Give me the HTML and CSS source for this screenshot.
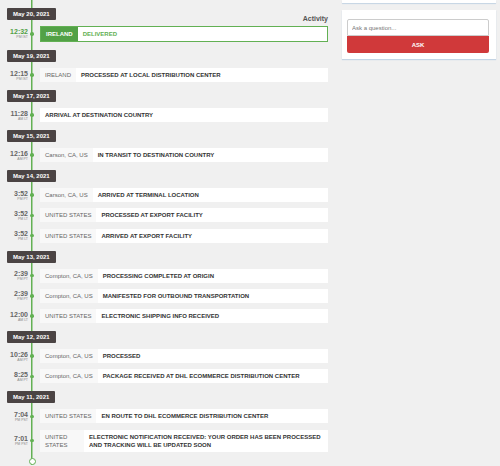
FILE: index.html
```html
<!DOCTYPE html>
<html lang="en">
<head>
    <meta charset="UTF-8">
    <meta name="viewport" content="width=device-width, initial-scale=1.0">
    <title>Shipment Activity</title>
    <link rel="stylesheet" href="styles.css">
</head>
<body>
    <div class="page">
        <div class="main">
            <div class="timeline">
                <h3 class="title">Activity</h3>

                <div class="day">
                    <div class="date">May 20, 2021</div>
                    <div class="event delivered">
                        <div class="time">12:32<small>PM IST</small></div>
                        <div class="dot"></div>
                        <div class="info"><span class="loc">IRELAND</span><span class="desc">DELIVERED</span></div>
                    </div>
                </div>

                <div class="day">
                    <div class="date">May 19, 2021</div>
                    <div class="event">
                        <div class="time">12:15<small>PM IST</small></div>
                        <div class="dot"></div>
                        <div class="info"><span class="loc">IRELAND</span><span class="desc">PROCESSED AT LOCAL DISTRIBUTION CENTER</span></div>
                    </div>
                </div>

                <div class="day">
                    <div class="date">May 17, 2021</div>
                    <div class="event">
                        <div class="time">11:28<small>AM LT</small></div>
                        <div class="dot"></div>
                        <div class="info"><span class="desc">ARRIVAL AT DESTINATION COUNTRY</span></div>
                    </div>
                </div>

                <div class="day">
                    <div class="date">May 15, 2021</div>
                    <div class="event">
                        <div class="time">12:16<small>AM PT</small></div>
                        <div class="dot"></div>
                        <div class="info"><span class="loc">Carson, CA, US</span><span class="desc">IN TRANSIT TO DESTINATION COUNTRY</span></div>
                    </div>
                </div>

                <div class="day">
                    <div class="date">May 14, 2021</div>
                    <div class="event">
                        <div class="time">3:52<small>PM PT</small></div>
                        <div class="dot"></div>
                        <div class="info"><span class="loc">Carson, CA, US</span><span class="desc">ARRIVED AT TERMINAL LOCATION</span></div>
                    </div>
                    <div class="event">
                        <div class="time">3:52<small>PM LT</small></div>
                        <div class="dot"></div>
                        <div class="info"><span class="loc">UNITED STATES</span><span class="desc">PROCESSED AT EXPORT FACILITY</span></div>
                    </div>
                    <div class="event">
                        <div class="time">3:52<small>PM LT</small></div>
                        <div class="dot"></div>
                        <div class="info"><span class="loc">UNITED STATES</span><span class="desc">ARRIVED AT EXPORT FACILITY</span></div>
                    </div>
                </div>

                <div class="day">
                    <div class="date">May 13, 2021</div>
                    <div class="event">
                        <div class="time">2:39<small>PM PT</small></div>
                        <div class="dot"></div>
                        <div class="info"><span class="loc">Compton, CA, US</span><span class="desc">PROCESSING COMPLETED AT ORIGIN</span></div>
                    </div>
                    <div class="event">
                        <div class="time">2:39<small>PM PT</small></div>
                        <div class="dot"></div>
                        <div class="info"><span class="loc">Compton, CA, US</span><span class="desc">MANIFESTED FOR OUTBOUND TRANSPORTATION</span></div>
                    </div>
                    <div class="event">
                        <div class="time">12:00<small>AM LT</small></div>
                        <div class="dot"></div>
                        <div class="info"><span class="loc">UNITED STATES</span><span class="desc">ELECTRONIC SHIPPING INFO RECEIVED</span></div>
                    </div>
                </div>

                <div class="day">
                    <div class="date">May 12, 2021</div>
                    <div class="event">
                        <div class="time">10:26<small>AM PT</small></div>
                        <div class="dot"></div>
                        <div class="info"><span class="loc">Compton, CA, US</span><span class="desc">PROCESSED</span></div>
                    </div>
                    <div class="event">
                        <div class="time">8:25<small>AM PT</small></div>
                        <div class="dot"></div>
                        <div class="info"><span class="loc">Compton, CA, US</span><span class="desc">PACKAGE RECEIVED AT DHL ECOMMERCE DISTRIBUTION CENTER</span></div>
                    </div>
                </div>

                <div class="day">
                    <div class="date">May 11, 2021</div>
                    <div class="event">
                        <div class="time">7:04<small>PM PST</small></div>
                        <div class="dot"></div>
                        <div class="info"><span class="loc">UNITED STATES</span><span class="desc">EN ROUTE TO DHL ECOMMERCE DISTRIBUTION CENTER</span></div>
                    </div>
                    <div class="event tall">
                        <div class="time">7:01<small>PM PST</small></div>
                        <div class="dot"></div>
                        <div class="info"><span class="loc narrow">UNITED STATES</span><span class="desc">ELECTRONIC NOTIFICATION RECEIVED: YOUR ORDER HAS BEEN PROCESSED AND TRACKING WILL BE UPDATED SOON</span></div>
                    </div>
                </div>

                <div class="end"></div>
            </div>
        </div>

        <div class="side">
            <div class="card card-top"></div>
            <div class="card ask">
                <input type="text" placeholder="Ask a question...">
                <button type="button">ASK</button>
            </div>
        </div>
    </div>
</body>
</html>
```

FILE: styles.css
```css
body {
    font-family: "Liberation Sans", Arial, sans-serif;
    margin: 0;
    padding: 0;
    background-color: #f0f0f0;
    color: #333;
}
.page {
    display: flex;
    align-items: flex-start;
}
.main {
    width: 328px;
}
.timeline {
    padding-top: 8px;
    background: linear-gradient(#62b053, #62b053) 31.25px 0 / 1.5px 100% no-repeat;
}
.title {
    float: right;
    margin: 6px 0 0;
    font-size: 7px;
    line-height: 10px;
    font-weight: bold;
    color: #555;
}
.day {
    padding-bottom: 1.75px;
}
.date {
    width: fit-content;
    margin: 0 0 6px 7px;
    padding: 0 6px;
    height: 12px;
    line-height: 12px;
    font-size: 6px;
    font-weight: bold;
    color: #fff;
    background-color: #4b4444;
    border-radius: 1px;
}
.event {
    display: flex;
    align-items: center;
    min-height: 14px;
    margin-bottom: 6.25px;
}
.time {
    width: 28px;
    align-self: flex-start;
    text-align: right;
    font-size: 7px;
    line-height: 7px;
    padding-top: 1.5px;
    font-weight: bold;
    color: #666;
}
.time small {
    display: block;
    font-size: 3.5px;
    line-height: 4px;
    font-weight: normal;
    color: #888;
}
.dot {
    width: 8px;
    display: flex;
    justify-content: center;
}
.dot::after {
    content: "";
    width: 3.5px;
    height: 3.5px;
    border-radius: 50%;
    background-color: #62b053;
}
.info {
    flex: 1;
    display: flex;
    align-items: stretch;
    margin-left: 4px;
    min-height: 14px;
    font-size: 6px;
    line-height: 8px;
}
.loc {
    flex-shrink: 0;
    display: flex;
    align-items: center;
    padding: 0 5px;
    color: #666;
    background-color: #f8f8f8;
}
.loc.narrow {
    width: 34px;
}
.desc {
    flex: 1;
    display: flex;
    align-items: center;
    padding: 3px 5px;
    font-weight: bold;
    color: #333;
    background-color: #fff;
}
.event.tall .time {
    padding-top: 5px;
}
.delivered .time {
    color: #52a146;
}
.delivered .info {
    border: 1px solid #62b053;
    min-height: 13px;
}
.delivered .loc {
    background-color: #52a146;
    color: #fff;
    font-weight: bold;
}
.delivered .desc {
    color: #62b053;
}
.end {
    width: 5px;
    height: 5px;
    margin: -2px 0 0 29px;
    border: 1.5px solid #62b053;
    border-radius: 50%;
    background-color: #fff;
}
.side {
    width: 154px;
    margin-left: 14px;
}
.card {
    background-color: white;
    box-shadow: 0 1px 1px #c4d4e4;
}
.card-top {
    height: 3px;
}
.ask {
    margin-top: 7px;
    padding: 9px 7px 6px 5px;
}
.ask input {
    display: block;
    width: 100%;
    box-sizing: border-box;
    height: 17px;
    margin: 0;
    padding: 0 4px;
    font-family: inherit;
    font-size: 6px;
    border: 1px solid #ccc;
    border-radius: 2px 2px 0 0;
}
.ask input::placeholder {
    color: #777;
}
.ask button {
    display: block;
    width: 100%;
    height: 17px;
    font-family: inherit;
    font-size: 6px;
    font-weight: bold;
    color: white;
    background-color: #d0393a;
    border: none;
    border-radius: 0 0 2px 2px;
}
```
